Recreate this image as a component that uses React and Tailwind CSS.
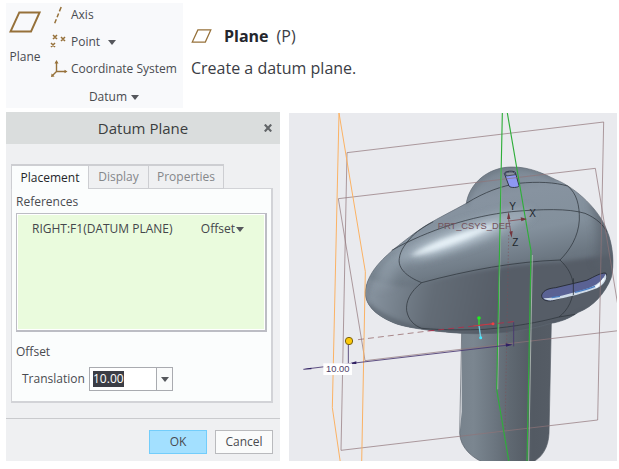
import { useEffect, useRef } from "react";

function Caret({ className = "" }) {
    return (
        <svg viewBox="0 0 8 5" className={`w-2 h-[5px] shrink-0 ${className}`} aria-hidden="true">
            <path d="M0 0h8L4 5z" fill="#55575c" />
        </svg>
    );
}

function PlaneIcon({ className }) {
    return (
        <svg viewBox="0 0 32 22" className={className} fill="none" stroke="#96713a" strokeWidth="2" aria-hidden="true">
            <path d="M10.3 1.4H30.6L22 20.6H1.5z" />
        </svg>
    );
}

function AxisIcon() {
    return (
        <svg viewBox="0 0 16 18" className="w-4 h-[18px]" fill="none" stroke="#96713a" strokeWidth="1.5" aria-hidden="true">
            <path d="M11.2 1L9.4 5.4M8.6 7.5L7.1 11.2M6.3 13.2L4.7 17.2" />
        </svg>
    );
}

function PointIcon() {
    return (
        <svg viewBox="0 0 18 16" className="w-[18px] h-4" fill="none" stroke="#96713a" strokeWidth="1.5" aria-hidden="true">
            <path d="M3 1l4 4M7 1L3 5M11 3l4 4M15 3l-4 4M1 9l4 4M5 9l-4 4" />
        </svg>
    );
}

function CsysIcon() {
    return (
        <svg viewBox="0 0 18 18" className="w-[18px] h-[18px]" fill="none" stroke="#96713a" strokeWidth="1.4" aria-hidden="true">
            <path d="M6.5 2V11.5H16M6.5 11.5L2.5 15.5" />
            <path d="M6.5 0L4.5 3.5h4zM17.5 11.5L14.5 9.8v3.4zM1 17l.6-3.6 3 3z" fill="#96713a" stroke="none" />
        </svg>
    );
}

function Ribbon() {
    return (
        <div className="w-[177px] shrink-0 bg-[#f8f9fb] pl-1 pb-[3px]">
            <div className="flex">
                <button className="flex flex-col items-center w-[30px] shrink-0 pt-2">
                    <PlaneIcon className="w-8 h-[22px] shrink-0" />
                    <span className="mt-4 leading-4">Plane</span>
                </button>
                <div className="flex flex-col pl-[10px]">
                    <button className="flex items-center h-6">
                        <span className="w-[21px]"><AxisIcon /></span>
                        Axis
                    </button>
                    <button className="flex items-center h-[30px]">
                        <span className="w-[21px]"><PointIcon /></span>
                        Point
                        <Caret className="ml-2" />
                    </button>
                    <button className="flex items-center h-6 whitespace-nowrap">
                        <span className="w-[21px]"><CsysIcon /></span>
                        Coordinate System
                    </button>
                </div>
            </div>
            <button className="flex items-center ml-auto mr-11 mt-2 leading-4">
                Datum
                <Caret className="ml-1" />
            </button>
        </div>
    );
}

function PlaneHint() {
    return (
        <div className="pt-[21px] text-base text-[#3b3d45]">
            <div className="flex items-center leading-6">
                <PlaneIcon className="w-[21px] h-[14px]" />
                <b className="ml-3 text-[#24262d]">Plane</b>
                <span className="ml-2">(P)</span>
            </div>
            <p className="mt-2 leading-6">Create a datum plane.</p>
        </div>
    );
}

function DatumDialog() {
    const valueRef = useRef(null);

    useEffect(() => {
        valueRef.current.focus();
        valueRef.current.select();
    }, []);

    return (
        <section className="w-[274px] shrink-0 flex flex-col bg-[#eff0f2]">
            <header className="relative h-8 bg-[#dadddd] flex items-center justify-center">
                <h1 className="text-[15px] text-[#3b3d40]">Datum Plane</h1>
                <button aria-label="Close" className="absolute right-2 top-3">
                    <svg viewBox="0 0 8 8" className="w-2 h-2" stroke="#626568" strokeWidth="2.2">
                        <path d="M.8 .6l6.4 6.8M7.2 .6L.8 7.4" />
                    </svg>
                </button>
            </header>

            <div className="pl-[5px] pt-5 pr-[7px]">
                <div role="tablist" className="relative flex h-[25px] -mb-px text-[#85878a]">
                    <button role="tab" aria-selected="true" className="w-[78px] border border-b-0 border-[#cdced2] border-t-2 bg-[#fbfdfd] text-[#242629]">Placement</button>
                    <button role="tab" aria-selected="false" className="w-[60px] border-y border-r border-t-2 border-[#cdced2]">Display</button>
                    <button role="tab" aria-selected="false" className="w-[75px] border-y border-r border-t-2 border-[#cdced2]">Properties</button>
                </div>
                <div role="tabpanel" className="border border-r-2 border-b-2 border-[#d2d3d7] bg-[#fbfdfd] px-1 pb-[10px]">
                    <h2 className="leading-4 pt-[5px] pb-[3px]">References</h2>
                    <div className="h-[119px] border border-r-2 border-b-2 border-[#bcbdc4] bg-white p-px">
                        <div className="h-full bg-[#eafbdd] flex items-start justify-between pl-[14px] pr-5 pt-[6px] text-[#44464b]">
                            <span className="leading-4 whitespace-nowrap">RIGHT:F1(DATUM PLANE)</span>
                            <label className="flex items-center leading-4">
                                <select aria-label="Constraint" className="appearance-none field-sizing-content bg-transparent outline-none">
                                    <option>Offset</option>
                                </select>
                                <Caret className="ml-px" />
                            </label>
                        </div>
                    </div>
                    <h2 className="leading-4 mt-3">Offset</h2>
                    <div className="flex items-center mt-[7px] pl-[6px]">
                        <label htmlFor="translation" className="w-[67px]">Translation</label>
                        <div className="flex h-6 w-[84px] border border-[#a9abb0] bg-white">
                            <input
                                id="translation"
                                ref={valueRef}
                                defaultValue="10.00"
                                className="min-w-0 flex-1 pl-[3px] outline-none selection:bg-[#3b3d45] selection:text-white"
                            />
                            <button aria-label="Show values" className="w-4 flex items-center justify-center border-l border-[#a9abb0] bg-[#fafbfb]">
                                <Caret />
                            </button>
                        </div>
                    </div>
                </div>
            </div>

            <footer className="mt-[15px] border-t border-[#c9cacd] flex justify-end gap-2 pt-[11px] pb-[7px] pr-[7px]">
                <button className="h-6 w-[58px] border border-[#72cdfb] bg-[#a3e0ff]">OK</button>
                <button className="h-6 w-[58px] border border-[#b9babd] bg-[#fafbfb]">Cancel</button>
            </footer>
        </section>
    );
}

const HEAD = "M544 295C553 235 610 186 680 186C735 185 780 208 812 224C875 249 945 318 965 375C984 417 989 480 978 520C960 565 925 605 880 622C852 641 825 651 798 655C715 681 620 690 530 685C455 680 380 671 335 657C275 634 240 602 241 560C246 505 290 463 330 430C355 410 390 382 425 360C465 336 505 317 544 295Z";

function ModelView() {
    return (
        <div className="relative flex-1 min-w-0 mt-px">
            <svg viewBox="12 24 984 1044" preserveAspectRatio="xMidYMid slice" className="absolute w-full h-full bg-[#e9eaee]">
                <defs>
                    <linearGradient id="stem" x1="0" x2="1" y1="0" y2="0">
                        <stop offset="0" stopColor="#78838d" />
                        <stop offset="0.15" stopColor="#7b8690" />
                        <stop offset="0.4" stopColor="#6a747e" />
                        <stop offset="0.55" stopColor="#5f6871" />
                        <stop offset="0.8" stopColor="#535a63" />
                        <stop offset="1" stopColor="#555c65" />
                    </linearGradient>
                    <linearGradient id="head" gradientUnits="userSpaceOnUse" x1="600" y1="190" x2="690" y2="640">
                        <stop offset="0" stopColor="#7a8692" />
                        <stop offset="0.2" stopColor="#8793a0" />
                        <stop offset="0.45" stopColor="#83909c" />
                        <stop offset="0.65" stopColor="#6c7782" />
                        <stop offset="1" stopColor="#565d67" />
                    </linearGradient>
                    <linearGradient id="under" gradientUnits="userSpaceOnUse" x1="250" y1="520" x2="640" y2="600">
                        <stop offset="0" stopColor="#8a96a2" />
                        <stop offset="0.25" stopColor="#76818c" />
                        <stop offset="0.5" stopColor="#636c76" />
                        <stop offset="1" stopColor="#565d67" />
                    </linearGradient>
                    <clipPath id="headClip">
                        <path d={HEAD} />
                    </clipPath>
                    <filter id="soft" filterUnits="userSpaceOnUse" x="0" y="0" width="1100" height="1100" colorInterpolationFilters="sRGB">
                        <feGaussianBlur stdDeviation="14" />
                    </filter>
                    <filter id="glow" filterUnits="userSpaceOnUse" x="0" y="0" width="1100" height="1100" colorInterpolationFilters="sRGB">
                        <feGaussianBlur stdDeviation="7" />
                    </filter>
                </defs>

                {/* stem */}
                <path d="M530 650V920L524 985C526 1030 565 1060 595 1072H742C770 1058 790 1030 792 985L799 650Z" fill="url(#stem)" />
                <path d="M530 684L524 985C526 1030 565 1060 595 1072M742 1072C770 1058 790 1030 792 985L799 654" fill="none" stroke="#565e67" strokeWidth="2" />

                {/* head */}
                <g clipPath="url(#headClip)">
                    <rect x="230" y="180" width="770" height="520" fill="url(#head)" />
                    <path d="M200 500C300 540 350 550 410 538C540 500 690 475 825 470L1050 440V740H200Z" fill="url(#under)" filter="url(#glow)" />
                    <path d="M915 290C935 350 945 400 930 470L1050 600V240Z" fill="#58606a" opacity="0.7" filter="url(#soft)" />
                    <path d="M250 600C235 560 260 500 330 440" fill="none" stroke="#6a7580" strokeWidth="8" opacity="0.7" filter="url(#glow)" />
                    <path d="M300 545C290 510 310 480 345 450" fill="none" stroke="#98a5b1" strokeWidth="50" opacity="0.5" filter="url(#soft)" />
                    <path d="M544 300C555 240 610 190 680 186C735 185 780 208 812 224" fill="none" stroke="#65707a" strokeWidth="10" opacity="0.6" filter="url(#glow)" />
                    <path d="M250 600C300 650 420 690 560 694C700 690 820 665 900 620" fill="none" stroke="#4b535d" strokeWidth="10" opacity="0.7" filter="url(#glow)" />
                    <ellipse cx="540" cy="390" rx="210" ry="34" transform="rotate(-19 540 390)" fill="#a6b4c0" opacity="0.75" filter="url(#soft)" />
                    <ellipse cx="520" cy="402" rx="135" ry="14" transform="rotate(-20 520 402)" fill="#cfdce6" filter="url(#soft)" />
                    <path d="M375 454C430 413 540 376 640 356C570 396 450 440 375 454Z" fill="#eaf4fa" opacity="0.9" filter="url(#glow)" />
                </g>
                <path d={HEAD} fill="none" stroke="#5d6771" strokeWidth="2" />

                {/* surface edges */}
                <g fill="none" stroke="#2f363d" strokeWidth="2.2">
                    <path d="M544 295C600 260 650 243 700 235C760 229 810 232 848 243C875 265 884 300 883 345C880 395 855 435 825 465C690 470 550 495 410 533C365 515 338 490 343 460C346 435 362 415 385 390C400 376 425 360 445 350" />
                    <path d="M320 436C430 375 560 333 680 320C770 312 850 310 900 325C935 340 955 360 965 380" />
                    <path d="M410 533C375 560 362 590 365 617C370 645 388 662 410 670C480 676 545 675 600 673C690 665 760 652 822 636C850 615 866 580 865 545C863 510 848 487 825 465" />
                    <path d="M822 636L870 628" />
                </g>

                {/* slots */}
                <path d="M770 570C776 554 793 550 812 548L905 526C930 514 945 504 962 504C970 515 958 535 938 547C915 558 890 564 865 568L802 587C784 590 768 584 770 570Z" fill="#5a6294" stroke="#22272e" strokeWidth="2.5" />
                <path d="M776 580C815 579 850 567 890 556C925 547 950 532 962 507C970 521 955 541 936 550C900 564 850 577 803 586C790 587 780 585 776 580Z" fill="#cfdbe8" />
                <path d="M800 578L825 574M870 562C895 556 915 550 930 544" stroke="#4a7fc4" strokeWidth="4" fill="none" />
                <path d="M932 547C945 538 952 530 957 520" stroke="#f4faff" strokeWidth="6" fill="none" />
                <path d="M865 520V570" stroke="#2b3238" strokeWidth="2.5" />
                <path d="M658 205C660 198 686 196 691 202L702 242C702 248 676 250 672 243Z" fill="#8e98f2" stroke="#22272e" strokeWidth="2.5" />
                <path d="M661 205C665 200 684 199 688 203L692 209L664 213Z" fill="#8993a0" stroke="#22272e" strokeWidth="2" />

                {/* datum planes */}
                <g fill="none" stroke="#8f7479" strokeWidth="2.1">
                    <path d="M186 143L956 51L938 945L168 1036Z" />
                    <path d="M1000 610L931 190L160 281L240 767L1000 677" />
                </g>
                <g fill="none" stroke="#fbb264" strokeWidth="3">
                    <path d="M162 24L142 908L166 1072M162 24L241 500L230 1072" />
                </g>
                <g fill="none" stroke="#b4beb8" strokeWidth="2.5">
                    <path d="M649 190L638 853M742 450L731 1068" />
                </g>
                <g fill="none" stroke="#2fae3a" strokeWidth="3.4">
                    <path d="M652 24L635 853L672 1072" />
                    <path d="M667 24L738 438L726 1072" />
                </g>

                {/* coordinate system */}
                <g fill="none" stroke="#824b52" strokeWidth="2.5">
                    <path d="M671 350V330M672 348L710 343M672 350L678 385" />
                    <path d="M671 390L660 980" strokeDasharray="4 6" opacity="0.7" />
                </g>
                <path d="M671 320L666 342H676ZM726 342L707 337L709 349ZM680 398L673 380L683 378Z" fill="#73363e" />
                <g fontFamily="'Liberation Sans', Arial, sans-serif">
                    <text x="458" y="371" fontSize="28" fill="#74535c">PRT_CSYS_DEF</text>
                    <g fontSize="30" fill="#20262c">
                        <text x="673" y="315">Y</text>
                        <text x="733" y="337">X</text>
                        <text x="682" y="424">Z</text>
                    </g>
                </g>

                {/* offset dimension */}
                <path d="M219 704L430 678" stroke="#9b7376" strokeWidth="2.5" strokeDasharray="18 12" />
                <path d="M430 678L686 650" stroke="#b62c48" strokeWidth="2.5" strokeDasharray="18 12" />
                <g fill="none" stroke="#483771" strokeWidth="2.6">
                    <path d="M55 793L192 776L680 719M190 718V780M686 652V724" />
                </g>
                <path d="M190 776L214 769V777ZM682 719L662 715L663 725ZM55 793L79 788V793Z" fill="#302063" />
                <rect x="115" y="775" width="86" height="35" fill="#fff" />
                <text x="123" y="802" fontSize="28" fill="#4c3d68" fontFamily="'Liberation Sans', Arial, sans-serif">10.00</text>
                <circle cx="192" cy="708" r="11" fill="#fbc808" stroke="#786116" strokeWidth="3" />

                {/* drag handle */}
                <path d="M582 640V661" stroke="#32df31" strokeWidth="4" />
                <path d="M582 661L587 698" stroke="#70cfe7" strokeWidth="4" />
                <path d="M565 663L624 656" stroke="#c83b45" strokeWidth="3" />
                <circle cx="582" cy="639" r="5.5" fill="#20ee20" />
                <circle cx="624" cy="656" r="4.5" fill="#f04040" />
                <circle cx="587" cy="698" r="4.5" fill="#46eaff" />
            </svg>
        </div>
    );
}

export default function App() {
    return (
        <main className="bg-white pl-[6px] pr-[2px] pt-[3px] pb-2 text-xs text-[#494b50] font-['Open_Sans','Noto_Sans',sans-serif]">
            <div className="flex gap-2">
                <Ribbon />
                <PlaneHint />
            </div>
            <div className="flex gap-[9px] mt-1">
                <DatumDialog />
                <ModelView />
            </div>
        </main>
    );
}
